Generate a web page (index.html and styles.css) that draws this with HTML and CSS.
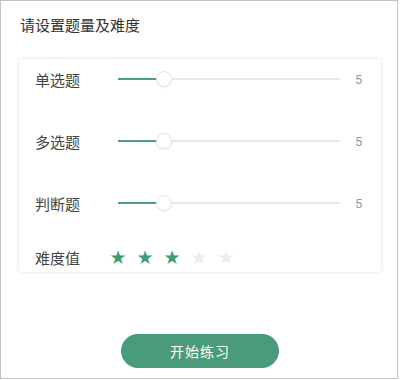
FILE: index.html
```html
<!DOCTYPE html>
<html>
<head>
  <meta charset="UTF-8">
  <title>题量设置</title>
  <link rel="stylesheet" href="styles.css">
</head>
<body>
<div class="page">
  <h1 class="title">请设置题量及难度</h1>

  <div class="card">
    <div class="row">
      <span class="label">单选题</span>
      <div class="slider">
        <div class="fill" style="width: 39px;"></div>
        <div class="thumb" style="left: 38px;"></div>
      </div>
      <span class="value">5</span>
    </div>
    <div class="row">
      <span class="label">多选题</span>
      <div class="slider">
        <div class="fill" style="width: 39px;"></div>
        <div class="thumb" style="left: 38px;"></div>
      </div>
      <span class="value">5</span>
    </div>
    <div class="row">
      <span class="label">判断题</span>
      <div class="slider">
        <div class="fill" style="width: 39px;"></div>
        <div class="thumb" style="left: 38px;"></div>
      </div>
      <span class="value">5</span>
    </div>
    <div class="row stars-row">
      <span class="label">难度值</span>
      <div class="stars">
        <span class="star on">★</span>
        <span class="star on">★</span>
        <span class="star on">★</span>
        <span class="star">★</span>
        <span class="star">★</span>
      </div>
    </div>
  </div>

  <div class="btn-wrap">
    <a class="start-btn" href="#">开始练习</a>
  </div>
</div>
</body>
</html>
```

FILE: styles.css
```css
* {
  margin: 0;
  padding: 0;
  box-sizing: border-box;
}

body {
  background: #fff;
  font-family: "Noto Sans CJK SC", "Noto Sans", sans-serif;
}

.page {
  width: 398px;
  height: 379px;
  border: 1px solid #c4c4c4;
  padding: 0 15px 0 17px;
  background: #fff;
}

.title {
  font-size: 15px;
  font-weight: normal;
  color: #333;
  line-height: 20px;
  margin-top: 14px;
  margin-left: 2px;
}

.card {
  margin-top: 23px;
  height: 215px;
  border: 1px solid #f1f1f1;
  border-radius: 3px;
  box-shadow: 0 0 4px rgba(0, 0, 0, 0.05);
  padding: 0 0 0 16px;
}

.row {
  display: flex;
  align-items: center;
  height: 40px;
  margin-bottom: 22px;
}

.label {
  width: 83px;
  font-size: 15px;
  color: #444;
}

.slider {
  position: relative;
  width: 222px;
  height: 2px;
  background: #e8e8e8;
}

.fill {
  height: 2px;
  background: #4c9e7e;
}

.thumb {
  position: absolute;
  top: -7px;
  width: 16px;
  height: 16px;
  border-radius: 50%;
  background: #fff;
  border: 1px solid #e6e6e6;
  box-shadow: 0 1px 2px rgba(0, 0, 0, 0.08);
}

.value {
  margin-left: 15px;
  font-size: 13px;
  color: #999;
  font-family: "Roboto", sans-serif;
}

.stars-row {
  height: 28px;
  margin-top: -2px;
  margin-bottom: 0;
}

.stars {
  display: flex;
  gap: 9px;
  margin-left: -9px;
}

.star {
  width: 18px;
  font-size: 19px;
  line-height: 18px;
  text-align: center;
  color: #ececec;
  font-family: "DejaVu Sans", sans-serif;
}

.star.on {
  color: #3f9b76;
}

.btn-wrap {
  display: flex;
  justify-content: center;
  margin-top: 61px;
}

.start-btn {
  display: block;
  width: 158px;
  height: 34px;
  line-height: 34px;
  border-radius: 17px;
  background: #4a9b79;
  color: #fff;
  text-align: center;
  text-decoration: none;
  font-size: 14px;
  letter-spacing: 1px;
}
```
